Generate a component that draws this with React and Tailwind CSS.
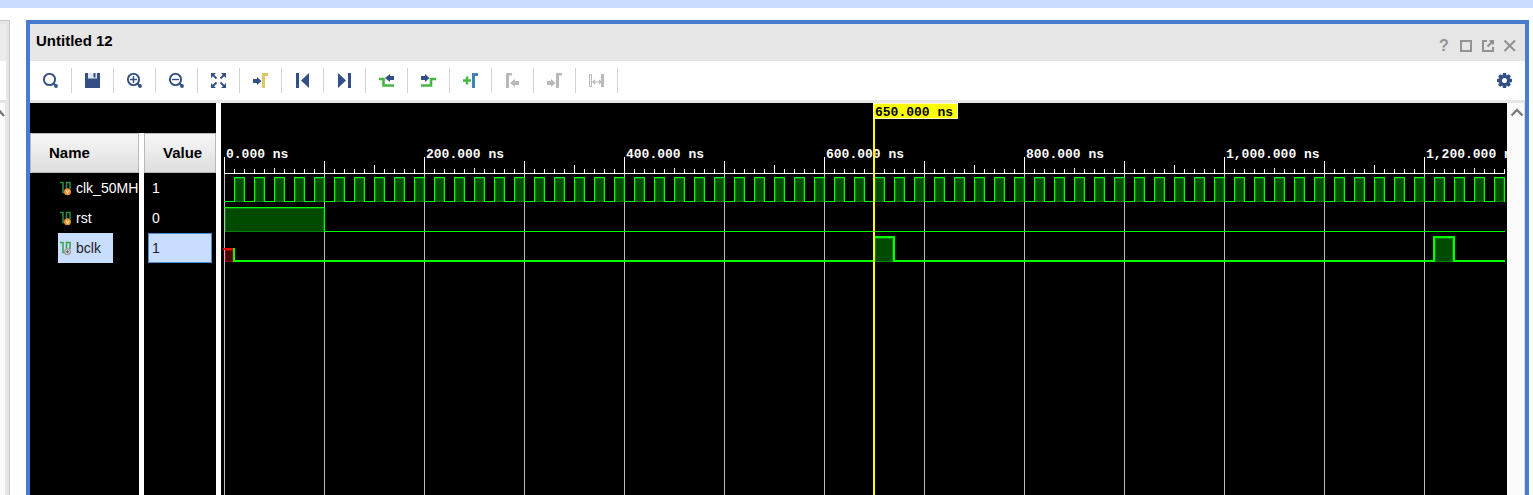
import React from "react";

const NAVY = "#334f85";
const GREEN = "#43b741";
const GRAY = "#b9b9b9";

const ARROW_RIGHT = "M0 -2H4V-4L8.5 0L4 4V2H0Z";
const ARROW_LEFT = "M9 -2H5V-4L0 0L5 4V2H9Z";

function Glyph({ children }) {
  return (
    <svg width="15" height="15" viewBox="0 0 15 15" fill="none" aria-hidden="true">
      {children}
    </svg>
  );
}

function Lens({ children }) {
  return (
    <Glyph>
      <circle cx="6.5" cy="6.5" r="5.6" stroke={NAVY} strokeWidth="1.9" />
      <path d="M10.5 10.5L12.5 12.5" stroke={NAVY} strokeWidth="2.2" />
      <circle cx="13" cy="13" r="1.9" fill={NAVY} />
      {children}
    </Glyph>
  );
}

const tools = [
  { label: "Find", icon: <Lens /> },
  {
    label: "Save",
    icon: (
      <Glyph>
        <path d="M0 0H15V15H0Z" fill={NAVY} />
        <path d="M3 0H12V5.5H3Z" fill="#e3e6ee" />
        <path d="M8.5 0H10.5V4.5H8.5Z" fill={NAVY} />
      </Glyph>
    ),
  },
  {
    label: "Zoom in",
    icon: (
      <Lens>
        <path d="M3 6.5H10M6.5 3V10" stroke={NAVY} strokeWidth="1.4" />
      </Lens>
    ),
  },
  {
    label: "Zoom out",
    icon: (
      <Lens>
        <path d="M3 6.5H10" stroke={NAVY} strokeWidth="1.4" />
      </Lens>
    ),
  },
  {
    label: "Zoom fit",
    icon: (
      <Glyph>
        <path d="M0 0H5L0 5ZM15 0V5L10 0ZM0 15V10L5 15ZM15 15H10L15 10Z" fill={NAVY} />
        <path d="M2 2L5.5 5.5M13 2L9.5 5.5M2 13L5.5 9.5M13 13L9.5 9.5" stroke={NAVY} strokeWidth="1.8" />
      </Glyph>
    ),
  },
  {
    label: "Go to cursor",
    icon: (
      <Glyph>
        <path d={ARROW_RIGHT} transform="translate(0 8)" fill={NAVY} />
        <path d="M9 0H15V3H12V15H9Z" fill="#e0c766" />
      </Glyph>
    ),
  },
  {
    label: "Go to time 0",
    icon: (
      <Glyph>
        <path d="M1 0H4V15H1ZM14 0V15L6 7.5Z" fill={NAVY} />
      </Glyph>
    ),
  },
  {
    label: "Go to last time",
    icon: (
      <Glyph>
        <path d="M11 0H14V15H11ZM1 0V15L9 7.5Z" fill={NAVY} />
      </Glyph>
    ),
  },
  {
    label: "Previous transition",
    icon: (
      <Glyph>
        <path d="M0 6H4.5V12.5H15" stroke={GREEN} strokeWidth="2.6" />
        <path d={ARROW_LEFT} transform="translate(6 5)" fill={NAVY} />
      </Glyph>
    ),
  },
  {
    label: "Next transition",
    icon: (
      <Glyph>
        <path d="M0 12.5H10V6H15" stroke={GREEN} strokeWidth="2.6" />
        <path d={ARROW_RIGHT} transform="translate(0 5)" fill={NAVY} />
      </Glyph>
    ),
  },
  {
    label: "Add marker",
    icon: (
      <Glyph>
        <path d="M0 7.5H8M4 3.5V11.5" stroke={GREEN} strokeWidth="2.4" />
        <path d="M9 0H15V3H12V15H9Z" fill="#3d83b5" />
      </Glyph>
    ),
  },
  {
    label: "Previous marker",
    disabled: true,
    icon: (
      <Glyph>
        <path d="M1 0H7V2.5H4V15H1Z" fill={GRAY} />
        <path d={ARROW_LEFT} transform="translate(5 10)" fill={GRAY} />
      </Glyph>
    ),
  },
  {
    label: "Next marker",
    disabled: true,
    icon: (
      <Glyph>
        <path d="M9 0H15V2.5H12V15H9Z" fill={GRAY} />
        <path d={ARROW_RIGHT} transform="translate(0 10)" fill={GRAY} />
      </Glyph>
    ),
  },
  {
    label: "Swap cursors",
    disabled: true,
    icon: (
      <Glyph>
        <path d="M0.5 1.5H2.5V13.5H0.5Z" stroke={GRAY} />
        <path d="M12 1H15V14H12Z" fill={GRAY} />
        <path d="M4 9H12M6 7L4 9L6 11M10 7L12 9L10 11" stroke={GRAY} strokeWidth="1.1" />
      </Glyph>
    ),
  },
];

const signals = [
  { name: "clk_50MH", value: "1", badge: "#ef8f2a" },
  { name: "rst", value: "0", badge: "#ef8f2a" },
  { name: "bclk", value: "1", badge: "#9a9a9a", selected: true },
];

function SignalIcon({ badge, selected }) {
  return (
    <svg width="14" height="16" viewBox="0 0 14 16" fill="none" className="shrink-0" aria-hidden="true">
      <path d="M2 2.5H5V12.5H8.5V2.5H12V9" stroke={selected ? "#37a04c" : "#2f8f45"} strokeWidth="1.5" />
      <circle cx="9.5" cy="11.8" r="3.5" fill={badge} />
      {selected ? (
        <circle cx="9.5" cy="11.8" r="1.8" fill="#555" stroke="#eee" />
      ) : (
        <path d="M8 10.5L9.5 13.2L11 10.5" stroke="#ffe9cc" strokeWidth="1.1" />
      )}
    </svg>
  );
}

function TitleControls() {
  return (
    <div className="flex items-center gap-2 pt-[6px] text-[#929292]">
      <button aria-label="Help" className="w-[14px] text-center text-base leading-4 font-bold">?</button>
      {[
        ["Maximize", "M3 3H13V13H3Z"],
        ["Float", "M7 3H3V13H13V9M7.5 8.5L12 4M9.5 3H13V6.5"],
        ["Close", "M2.5 2.5L13 13M13 2.5L2.5 13"],
      ].map(([label, d]) => (
        <button key={label} aria-label={label} className="w-[14px]">
          <svg width="14" height="14" viewBox="1 1 14 14" fill="none" stroke="currentColor" strokeWidth="2">
            <path d={d} />
          </svg>
        </button>
      ))}
    </div>
  );
}

function Gear() {
  return (
    <Glyph>
      {[0, 45, 90, 135].map((a) => (
        <path key={a} d="M6 0H9L10 4V11L9 15H6L5 11V4Z" transform={`rotate(${a} 7.5 7.5)`} fill={NAVY} />
      ))}
      <circle cx="7.5" cy="7.5" r="2.5" fill="#fff" />
    </Glyph>
  );
}

function SignalTable() {
  const head =
    "flex h-10 items-center border border-[#b9b9b9] bg-linear-to-b from-[#f7f7f7] to-[#dededf] pl-[18px] text-[15px] font-bold text-black";
  return (
    <div className="flex w-[186px] shrink-0 flex-col bg-black pt-[30px]">
      <table className="w-full flex-1 table-fixed border-separate border-spacing-0 text-left text-sm text-white">
        <colgroup>
          <col className="w-[114px]" />
          <col />
        </colgroup>
        <thead>
          <tr className="h-10">
            <th className="border-r-[5px] border-white p-0">
              <div className={head}>Name</div>
            </th>
            <th className="p-0">
              <div className={head}>Value</div>
            </th>
          </tr>
        </thead>
        <tbody>
          {signals.map((s) => (
            <tr key={s.name} className="h-[30px]">
              <td className="overflow-hidden border-r-[5px] border-white p-0 pl-7">
                <div
                  className={
                    s.selected
                      ? "flex h-[30px] w-[55px] items-center gap-1 bg-[#c9ddff] text-[#222]"
                      : "flex h-[30px] items-center gap-1"
                  }
                >
                  <SignalIcon badge={s.badge} selected={s.selected} />
                  {s.name}
                </div>
              </td>
              <td className="p-0 px-1">
                <div
                  className={
                    s.selected
                      ? "flex h-[30px] items-center border border-[#4a90cf] bg-[#c9ddff] pl-[3px] text-[#222]"
                      : "flex h-[30px] items-center pl-1"
                  }
                >
                  {s.value}
                </div>
              </td>
            </tr>
          ))}
          <tr>
            <td className="border-r-[5px] border-white p-0" />
            <td className="p-0" />
          </tr>
        </tbody>
      </table>
    </div>
  );
}

const END = 1280;
const AXIS = 70;
const range = (n) => Array.from({ length: n }, (_, i) => i);

const labels = [
  [0, "0.000 ns"],
  [200, "200.000 ns"],
  [400, "400.000 ns"],
  [600, "600.000 ns"],
  [800, "800.000 ns"],
  [1000, "1,000.000 ns"],
  [1200, "1,200.000 ns"],
];

function tickTop(t) {
  if (t % 200 === 0) return 54;
  if (t % 100 === 0) return 58;
  if (t % 100 === 50) return t % 200 === 50 ? 65 : 62;
  return 66;
}

function Pulse({ x, y, w, h, fill = "#004b00", edge = "#008000" }) {
  return <rect x={x + 0.5} y={y + 0.5} width={w - 1} height={h - 1} fill={fill} stroke={edge} />;
}

// One user unit is one nanosecond; x = 0 is the start of the simulation.
function Waveform() {
  const clock =
    "M0 98.5H10.5" + range(64).map((i) => `V74.5H${20.5 + 20 * i}V98.5H${Math.min(30.5 + 20 * i, END)}`).join("");
  return (
    <svg className="w-0 min-w-0 flex-1 bg-black" role="img" aria-label="Waveform" shapeRendering="crispEdges">
      <g transform="translate(3 0)">
        {range(13).map((i) => (
          <rect key={i} x={i * 100} y={AXIS} width="1" height="100%" fill="#bdbdbd" />
        ))}
        <rect x="0" y={AXIS} width={END + 1} height="1" fill="#fff" />
        {range(129).map((i) => (
          <rect key={i} x={i * 10} y={tickTop(i * 10)} width="1" height={AXIS - tickTop(i * 10)} fill="#fff" />
        ))}
        {labels.map(([t, text]) => (
          <text
            key={t}
            x={t + 2}
            y="55"
            fill="#fff"
            className="font-['Liberation_Mono',monospace] text-[13px] font-bold"
          >
            {text}
          </text>
        ))}

        {range(64).map((i) => (
          <Pulse key={i} x={11 + 20 * i} y={75} w={9} h={24} />
        ))}
        <path d={clock} fill="none" stroke="#00ff00" />

        <Pulse x={1} y={105} w={99} h={24} />
        <path d={`M0 104.5H100.5V128.5H${END + 1}`} fill="none" stroke="#00ff00" />

        <Pulse x={1} y={147} w={8} h={12} fill="#4b0000" edge="#900000" />
        <path d="M-1 146H9" stroke="#ff0000" strokeWidth="2" />
        <Pulse x={651} y={135} w={18} h={24} />
        <Pulse x={1211} y={135} w={18} h={24} />
        <path
          d={`M10 145V158H650V134H670V158H1210V134H1230V158H${END + 1}`}
          fill="none"
          stroke="#00ff00"
          strokeWidth="2"
        />

        <rect x="649" y="0" width="2" height="100%" fill="#ffff00" />
        <rect x="649" y="0" width="85" height="16" fill="#ffffc0" />
        <rect x="650" y="1" width="83" height="14" fill="#ffff00" />
        <text x="651" y="13" fill="#000" className="font-['Liberation_Mono',monospace] text-[13px] font-bold">
          650.000 ns
        </text>
      </g>
    </svg>
  );
}

function NeighbourPanel() {
  return (
    <div className="mt-3 flex w-[10px] shrink-0 flex-col border-t border-r border-[#c6c6c6] bg-[#e6e6e6] pt-[3px] pr-[3px]">
      <div className="h-[37px] bg-[#ececec]" />
      <div className="mb-[3px] h-[39px] bg-white" />
      <div className="mr-px flex-1 bg-[#fbfbfb] pt-[6px]">
        <svg width="5" height="9" viewBox="0 0 5 9" fill="none" aria-hidden="true">
          <path d="M-2 0L4 7" stroke="#7c7c7c" strokeWidth="2.4" />
        </svg>
      </div>
    </div>
  );
}

export default function App() {
  return (
    <div className="flex h-screen flex-col overflow-hidden bg-white font-['Liberation_Sans',Arial,sans-serif]">
      <div className="h-2 shrink-0 bg-[#c9ddff]" />
      <div className="flex min-h-0 flex-1">
        <NeighbourPanel />
        <main className="mt-3 mr-1 ml-4 flex min-w-0 flex-1 flex-col border-4 border-b-0 border-[#4a7ccd] bg-white">
          <header className="flex h-[37px] shrink-0 items-center justify-between bg-[#e6e6e6] pr-2 pl-[6px]">
            <h1 className="pb-[3px] text-[15px] font-bold text-black">Untitled 12</h1>
            <TitleControls />
          </header>
          <div className="flex h-[42px] shrink-0 items-center border-b-3 border-[#e6e6e6]" role="toolbar">
            {tools.map((t) => (
              <button
                key={t.label}
                aria-label={t.label}
                disabled={t.disabled}
                className="flex h-[25px] w-[42px] items-center justify-center border-r border-[#d4d4d4]"
              >
                {t.icon}
              </button>
            ))}
            <button aria-label="Settings" className="mr-[13px] ml-auto">
              <Gear />
            </button>
          </div>
          <div className="flex min-h-0 flex-1">
            <SignalTable />
            <div className="w-[5px] shrink-0 bg-white" />
            <Waveform />
            <div className="flex w-[18px] shrink-0 flex-col items-center border-r border-[#dcdcdc] bg-[#fbfbfb] pt-[5px] pl-[2px]">
              <button aria-label="Scroll up">
                <svg width="14" height="9" viewBox="0 0 14 9" fill="none">
                  <path d="M1.5 7.5L7 2L12.5 7.5" stroke="#7c7c7c" strokeWidth="2.4" />
                </svg>
              </button>
            </div>
          </div>
        </main>
      </div>
    </div>
  );
}
